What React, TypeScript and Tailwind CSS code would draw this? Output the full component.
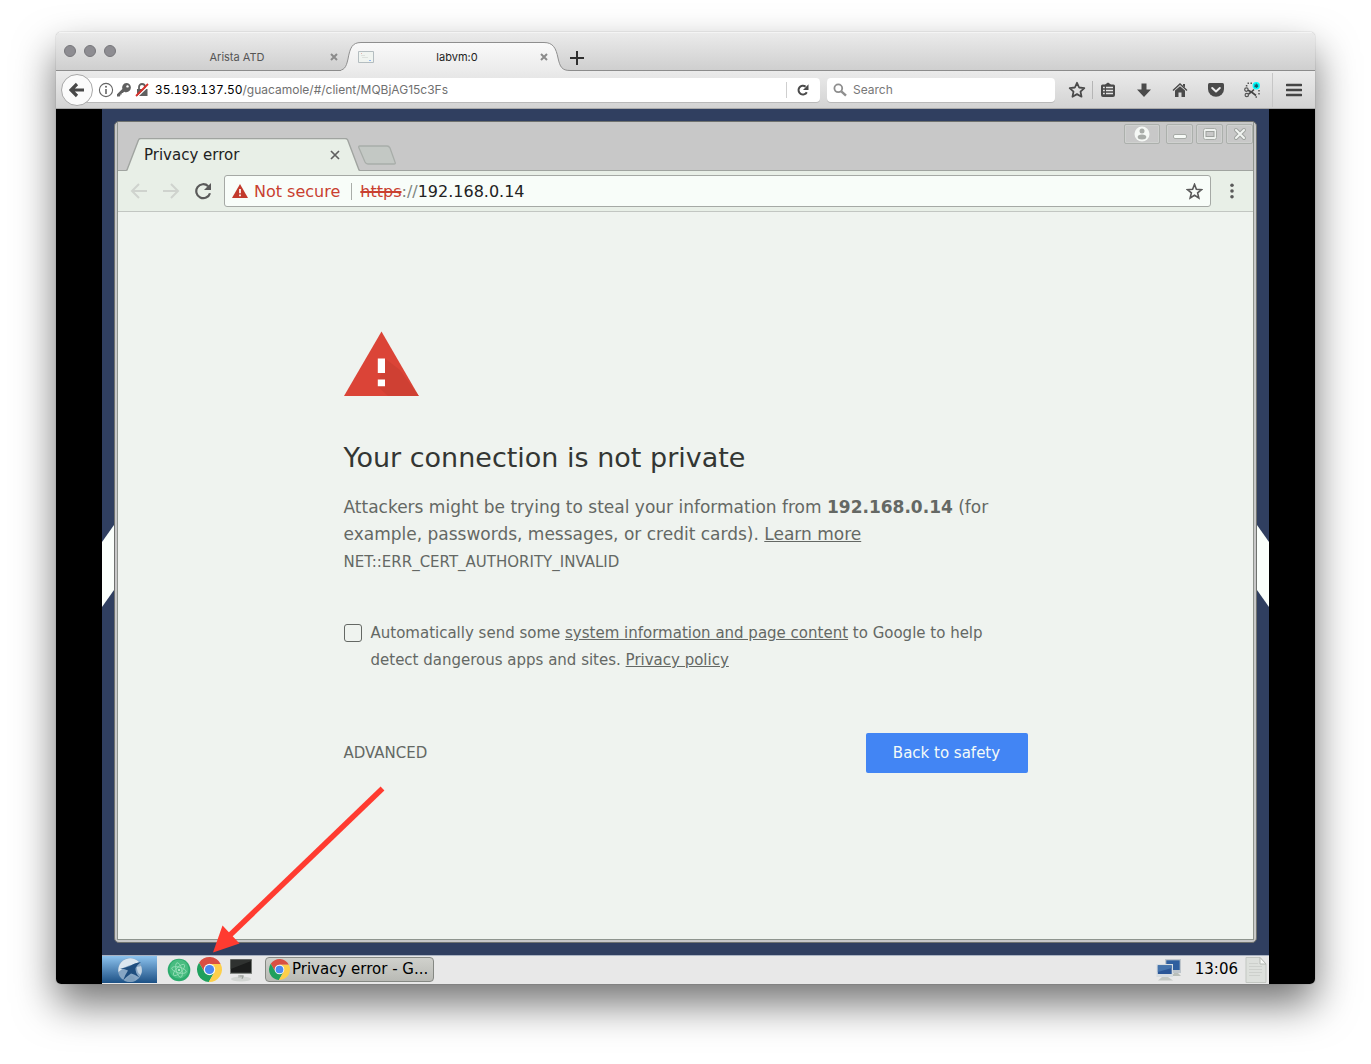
import React from "react";

function ChromeLogo({ className }: { className: string }) {
  return (
    <svg viewBox="0 0 24 24" className={className} aria-hidden="true">
      <path d="M22.7 6.6A12 12 0 0 0 1.96 5.43L7.32 14.7L12 6.6Z" fill="#da4f43" />
      <path d="M1.96 5.43A12 12 0 0 0 11.33 23.98L16.68 14.7L7.32 14.7Z" fill="#1fa05d" />
      <path d="M11.33 23.98A12 12 0 0 0 22.7 6.6L12 6.6L16.68 14.7Z" fill="#fdcf49" />
      <circle cx="12" cy="12" r="5.5" fill="#f5f7f5" />
      <circle cx="12" cy="12" r="4.4" fill="#4a88f0" />
    </svg>
  );
}

function TabClose() {
  return (
    <svg viewBox="0 0 8 8" className="size-2" aria-hidden="true">
      <path d="M1 1L7 7M7 1L1 7" stroke="#8b8b8b" strokeWidth="2" />
    </svg>
  );
}

function TitleBar() {
  return (
    <div className="flex h-[39px] border-b border-[#8c8c8c] border-t border-t-[#f4f4f4] bg-linear-to-b from-[#ebebeb] to-[#cfcfcf]">
      <div className="flex w-[70px] shrink-0 gap-2 pt-3 pl-2">
        <button aria-label="Close window" className="size-3 rounded-full border border-[#77777b] bg-[#8e8d92]" />
        <button aria-label="Minimize window" className="size-3 rounded-full border border-[#77777b] bg-[#8e8d92]" />
        <button aria-label="Zoom window" className="size-3 rounded-full border border-[#77777b] bg-[#8e8d92]" />
      </div>
      <div className="flex w-[215px] items-center pt-[11px]">
        <span className="flex-1 pl-[18px] text-center text-[11px] text-[#555]">Arista ATD</span>
        <button aria-label="Close Arista ATD" className="mr-[3px] p-0">
          <TabClose />
        </button>
      </div>
      <div className="relative -mb-px flex w-[229px] items-center pt-[10px] pr-[22px] pl-[17px]">
        <svg viewBox="0 0 229 29" className="absolute bottom-0 left-0 h-[29px] w-[229px]" aria-hidden="true">
          <defs>
            <linearGradient id="activeTab" x1="0" y1="0" x2="0" y2="1">
              <stop offset="0" stopColor="#fafafa" />
              <stop offset="1" stopColor="#ebebeb" />
            </linearGradient>
          </defs>
          <path d="M-4 29L-4 28.5C3 28.5 5 26 7 17C9 6 11 0.5 20 0.5H203C212 0.5 215 6 217 16C219 25 221 28.5 229 28.5V29Z" fill="url(#activeTab)" />
          <path d="M-4 28.5C3 28.5 5 26 7 17C9 6 11 0.5 20 0.5H203C212 0.5 215 6 217 16C219 25 221 28.5 229 28.5" fill="none" stroke="#8f8f8f" />
        </svg>
        <svg viewBox="0 0 16 12" className="relative h-3 w-4" aria-hidden="true">
          <path d="M0.5 0.5H15.5V11.5H0.5Z" fill="#f0f4f0" stroke="#b4bdc0" />
          <path d="M3 4.5H7M4 6.5H10" stroke="#dde1dd" />
          <path d="M3 2.5H4" stroke="#e2b5af" />
          <path d="M11 9.5H13" stroke="#8fb6f4" />
        </svg>
        <span className="relative flex-1 text-center text-[11px] text-[#222]">labvm:0</span>
        <button aria-label="Close labvm:0" className="relative">
          <TabClose />
        </button>
      </div>
      <button aria-label="New tab" className="pt-3">
        <svg viewBox="0 0 14 14" className="size-[14px]" aria-hidden="true">
          <path d="M7 0V14M0 7H14" stroke="#2f2f2f" strokeWidth="2" />
        </svg>
      </button>
    </div>
  );
}

function NavToolbar() {
  return (
    <div className="flex h-[38px] items-center border-b border-[#a9a9a9] bg-linear-to-b from-[#ebebeb] to-[#d3d3d3] pl-[5px]">
      <button aria-label="Back" className="z-10 flex size-8 shrink-0 items-center justify-center rounded-full border border-[#a8a8a8] bg-[#fbfbfb]">
        <svg viewBox="0 0 16 16" className="size-4" aria-hidden="true">
          <path d="M8 2L2 8L8 14M2.5 8H15" fill="none" stroke="#484848" strokeWidth="3.2" />
        </svg>
      </button>
      <div className="-ml-2 flex h-6 flex-1 items-center rounded-r bg-white pl-3 shadow-[0_1px_0_#b9b9b9]">
        <svg viewBox="0 0 16 16" className="mx-px size-4" aria-hidden="true">
          <circle cx="8" cy="8" r="6.6" fill="none" stroke="#666" strokeWidth="1.1" />
          <path d="M8 7V12" stroke="#666" strokeWidth="1.6" />
          <circle cx="8" cy="4.8" r="1" fill="#666" />
        </svg>
        <svg viewBox="0 0 16 16" className="ml-px size-4" aria-hidden="true">
          <path d="M10.3 1A4.6 4.6 0 0 1 10.3 10.2Q9 10.2 8.2 9.7L6.8 11.1L5.8 11.1L5.6 12.4L4.4 12.6L4.2 13.9L3.5 14.6H1V12.2L6.3 6.9A4.6 4.6 0 0 1 10.3 1Z" fill="#606060" />
          <circle cx="11.5" cy="4.4" r="1.2" fill="#fff" />
        </svg>
        <svg viewBox="0 0 16 16" className="ml-[2px] size-4" aria-hidden="true">
          <path d="M5 7V5A3 3 0 0 1 11 5V7" fill="none" stroke="#606060" strokeWidth="1.8" />
          <path d="M3 7H13.5V14H3Z" fill="#606060" />
          <path d="M3.5 14.5L15.5 3" stroke="#fff" strokeWidth="1.4" />
          <path d="M2 14L14 2" stroke="#d8302b" strokeWidth="1.8" />
        </svg>
        <label htmlFor="address" className="pl-[5px] text-xs text-black tabular-nums">35.193.137.50</label>
        <input
          id="address"
          defaultValue="/guacamole/#/client/MQBjAG15c3Fs"
          className="min-w-0 flex-1 bg-transparent text-xs text-[#707070] outline-none"
        />
        <button aria-label="Reload" className="flex h-4 w-[34px] items-center border-l border-[#cfcfcf] pl-[10px]">
          <svg viewBox="0 0 12 12" className="size-3" aria-hidden="true">
            <path d="M9.8 8.2A4.4 4.4 0 1 1 8.6 2.6" fill="none" stroke="#4a4a4a" strokeWidth="2" />
            <path d="M11.5 0.3V6H6Z" fill="#4a4a4a" />
          </svg>
        </button>
      </div>
      <div className="ml-[7px] flex h-6 w-[228px] items-center rounded bg-white pl-[6px] shadow-[0_1px_0_#b9b9b9]">
        <svg viewBox="0 0 14 14" className="size-[14px]" aria-hidden="true">
          <circle cx="5.3" cy="5.3" r="3.9" fill="none" stroke="#8e8e8e" strokeWidth="1.8" />
          <path d="M8.3 8.3L13 12.7" stroke="#8e8e8e" strokeWidth="2.4" />
        </svg>
        <input
          aria-label="Search"
          placeholder="Search"
          className="min-w-0 flex-1 bg-transparent pl-[6px] text-xs outline-none placeholder:text-[#777]"
        />
      </div>
      <div className="flex shrink-0 items-center pl-[13px]">
        <button aria-label="Bookmark this page" className="flex w-[25px] items-center border-r border-[#b5b5b5]">
          <svg viewBox="0 0 18 18" className="size-[18px]" aria-hidden="true">
            <path d="M9 1.8L11.1 6.5L16.3 7.1L12.5 10.6L13.5 15.7L9 13.1L4.5 15.7L5.5 10.6L1.7 7.1L6.9 6.5Z" fill="none" stroke="#4a4a4a" strokeWidth="1.8" strokeLinejoin="round" />
          </svg>
        </button>
        <button aria-label="Bookmarks menu" className="ml-[7px] w-4">
          <svg viewBox="0 0 16 16" className="size-4" aria-hidden="true">
            <path d="M2.5 2.5H5L8 0.5L11 2.5H13.5Q15 2.5 15 4V13Q15 15 13 15H3Q1 15 1 13V4Q1 2.5 2.5 2.5Z" fill="#4a4a4a" />
            <path d="M3 5.5H4.8M6 5.5H13M3 8.5H4.8M6 8.5H13M3 11.5H4.8M6 11.5H13" stroke="#e4e4e4" strokeWidth="1.6" />
          </svg>
        </button>
        <button aria-label="Downloads" className="ml-5 w-4">
          <svg viewBox="0 0 16 16" className="size-4" aria-hidden="true">
            <path d="M5.5 1.5H10.5V7.5H15L8 15L1 7.5H5.5Z" fill="#4a4a4a" />
          </svg>
        </button>
        <button aria-label="Home" className="ml-5 w-4">
          <svg viewBox="0 0 16 16" className="size-4" aria-hidden="true">
            <path d="M1 8.5L8 2L15 8.5" fill="none" stroke="#4a4a4a" strokeWidth="1.4" />
            <path d="M3 8.6L8 4.2L13 8.6V15H9.5V10.5H6.5V15H3Z" fill="#4a4a4a" />
            <path d="M11 2H13V5.5L11 3.7Z" fill="#4a4a4a" />
          </svg>
        </button>
        <button aria-label="Save to Pocket" className="ml-5 w-4">
          <svg viewBox="0 0 16 16" className="size-4" aria-hidden="true">
            <path d="M1.5 1H14.5Q16 1 16 2.5V7A8 7.8 0 0 1 0 7V2.5Q0 1 1.5 1Z" fill="#4a4a4a" />
            <path d="M4.2 6L8 9.5L11.8 6" fill="none" stroke="#ececec" strokeWidth="2" strokeLinecap="round" strokeLinejoin="round" />
          </svg>
        </button>
        <button aria-label="Take a screenshot" className="ml-5 w-4">
          <svg viewBox="0 0 16 16" className="size-4" aria-hidden="true">
            <path d="M3.5 1.2H5M6.5 1.2H8M2.6 3V4.5M15 8V9.5M15 11V12.5M11.5 15H13" stroke="#555" strokeWidth="1.5" />
            <circle cx="2.4" cy="7.6" r="1.7" fill="none" stroke="#555" strokeWidth="1.2" />
            <circle cx="2.8" cy="13" r="1.7" fill="none" stroke="#555" strokeWidth="1.2" />
            <path d="M4 8.2L7.5 10L12 13.5M4.6 12L8 9.5L10 7.5" fill="none" stroke="#444" strokeWidth="1.6" />
            <circle cx="12.3" cy="3.8" r="3.7" fill="#0ff" />
            <path d="M12.3 1.6V6M10.4 2.7L14.2 4.9M14.2 2.7L10.4 4.9" stroke="#1a5a66" strokeWidth="1.1" />
          </svg>
        </button>
        <button aria-label="Open menu" className="ml-3 flex h-[34px] w-[43px] items-center justify-center border-l border-[#c6c6c6]">
          <svg viewBox="0 0 16 14" className="h-[14px] w-4" aria-hidden="true">
            <path d="M1 2H15M1 7H15M1 12H15" stroke="#454545" strokeWidth="2.6" strokeLinecap="round" />
          </svg>
        </button>
      </div>
    </div>
  );
}

const controlClass =
  "flex h-5 items-center justify-center rounded-[2px] border border-[#acb0ac] shadow-[inset_0_0_0_1px_#cfd1cf]";

function GuestHeader() {
  return (
    <div className="relative flex h-[49px] items-end justify-between border-b border-[#a0a4a0] bg-[#c8c8c8] pl-2">
      <div className="-mb-px flex">
        <div className="relative flex h-[33px] w-[234px] items-center justify-between pr-5 pl-[18px]">
          <svg viewBox="0 0 234 33" className="absolute inset-0 h-[33px] w-[234px]" aria-hidden="true">
            <path d="M0 33V32.5L1 32L12.5 2Q13 0.5 15 0.5H219Q221 0.5 221.7 2L233 32L234 33Z" fill="#e8efe7" />
            <path d="M0 32.5L1 32L12.5 2Q13 0.5 15 0.5H219Q221 0.5 221.7 2L233 32L234 32.5" fill="none" stroke="#a0a4a0" strokeWidth="1.4" />
          </svg>
          <span className="relative pt-px text-[15px] text-[#222]">Privacy error</span>
          <button aria-label="Close tab" className="relative">
            <svg viewBox="0 0 10 10" className="size-[10px]" aria-hidden="true">
              <path d="M1 1L9 9M9 1L1 9" stroke="#606060" strokeWidth="1.7" />
            </svg>
          </button>
        </div>
        <button aria-label="New tab" className="-ml-1 mb-1 self-end">
          <svg viewBox="0 0 42 22" className="h-[22px] w-[42px]" aria-hidden="true">
            <path d="M4 1H31Q33 1 34 3L39 17Q40 19 38 19H12Q10 19 9 17L3 3Q2 1 4 1Z" fill="#c3c8c4" stroke="#a8ada9" strokeWidth="1.3" />
          </svg>
        </button>
      </div>
      <div className="flex gap-[3px] self-start pt-[2px]">
        <button aria-label="Profile" className={`${controlClass} mr-[3px] w-9`}>
          <svg viewBox="0 0 16 16" className="size-4" aria-hidden="true">
            <circle cx="8" cy="8" r="7.5" fill="#f5f8f5" />
            <circle cx="8" cy="5" r="2.5" fill="#a8aca8" />
            <ellipse cx="8" cy="11" rx="4.3" ry="2.5" fill="#a8aca8" />
          </svg>
        </button>
        <button aria-label="Minimize" className={`${controlClass} w-[27px]`}>
          <svg viewBox="0 0 14 14" className="size-[14px]" aria-hidden="true">
            <rect x="0.5" y="7.5" width="13" height="4" rx="1.5" fill="#f7faf7" stroke="#a6aaa6" />
          </svg>
        </button>
        <button aria-label="Maximize" className={`${controlClass} w-[27px]`}>
          <svg viewBox="0 0 14 12" className="h-3 w-[14px]" aria-hidden="true">
            <rect x="0.5" y="0.5" width="13" height="11" rx="2" fill="#eef1ee" stroke="#a6aaa6" />
            <rect x="3" y="3.5" width="8" height="5" fill="#c8c8c8" stroke="#9da19d" />
          </svg>
        </button>
        <button aria-label="Close" className={`${controlClass} w-[27px]`}>
          <svg viewBox="0 0 14 14" className="size-[14px]" aria-hidden="true">
            <path d="M3 3L11 11M11 3L3 11" stroke="#a0a4a0" strokeWidth="4" strokeLinecap="round" />
            <path d="M3 3L11 11M11 3L3 11" stroke="#f2f5f2" strokeWidth="2" strokeLinecap="round" />
          </svg>
        </button>
      </div>
    </div>
  );
}

function GuestToolbar() {
  return (
    <div className="flex h-[41px] items-center border-b border-[#c2c6c2] bg-[#e8efe7] pl-3">
      <button aria-label="Back" className="w-8">
        <svg viewBox="0 0 18 18" className="size-[18px]" aria-hidden="true">
          <path d="M9 2L2 9L9 16M2 9H17" fill="none" stroke="#cfd3ce" strokeWidth="2" />
        </svg>
      </button>
      <button aria-label="Forward" className="w-8">
        <svg viewBox="0 0 18 18" className="size-[18px]" aria-hidden="true">
          <path d="M9 2L16 9L9 16M16 9H1" fill="none" stroke="#cfd3ce" strokeWidth="2" />
        </svg>
      </button>
      <button aria-label="Reload page" className="w-[30px]">
        <svg viewBox="0 0 18 18" className="size-[18px]" aria-hidden="true">
          <path d="M16 11.2A7 7 0 1 1 14.2 4.2" fill="none" stroke="#5a5a5a" strokeWidth="2.2" />
          <path d="M17 1V8H10Z" fill="#5a5a5a" />
        </svg>
      </button>
      <div className="flex h-8 flex-1 items-center rounded-[3px] border border-[#a5a9a5] bg-[#f8fdf9] px-[7px] text-base">
        <svg viewBox="0 0 16 14" className="h-[14px] w-4" aria-hidden="true">
          <path d="M8 0L16 14H0Z" fill="#c23a2b" />
          <path d="M8 5V9.3M8 10.6V12.2" stroke="#fff" strokeWidth="1.7" />
        </svg>
        <span className="ml-[6px] border-r border-[#a9ada9] pt-px pr-[11px] text-base leading-4 whitespace-nowrap text-[#c9402f]">Not secure</span>
        <label htmlFor="guest-address" className="pt-px pl-2 text-base text-[#808580]">
          <span className="text-[#c9402f] line-through decoration-2">https</span>://
        </label>
        <input id="guest-address" defaultValue="192.168.0.14" className="min-w-0 flex-1 bg-transparent pt-px text-base text-[#222] outline-none" />
        <button aria-label="Bookmark">
          <svg viewBox="0 0 18 18" className="size-[17px]" aria-hidden="true">
            <path d="M9 1.5L11 6.6L16.5 7L12.3 10.5L13.6 15.9L9 13L4.4 15.9L5.7 10.5L1.5 7L7 6.6Z" fill="none" stroke="#5a5a5a" strokeWidth="1.7" />
          </svg>
        </button>
      </div>
      <button aria-label="Menu" className="flex w-[42px] justify-center">
        <svg viewBox="0 0 4 16" className="h-4 w-1" aria-hidden="true">
          <circle cx="2" cy="2.3" r="1.8" fill="#5a5a5a" />
          <circle cx="2" cy="8" r="1.8" fill="#5a5a5a" />
          <circle cx="2" cy="13.7" r="1.8" fill="#5a5a5a" />
        </svg>
      </button>
    </div>
  );
}

function PrivacyError() {
  return (
    <main className="flex-1 bg-[#eff3ef] pt-[119px] text-[#646864]">
      <div className="mx-auto max-w-[684px]">
        <svg viewBox="0 0 76 66" className="h-[66px] w-[76px]" aria-hidden="true">
          <path d="M37.5 0.5L74.8 65H0Z" fill="#db4437" />
          <path d="M41 27.5L56 39L74.8 65H44L33.8 55.5L37 42Z" fill="#cf4033" />
          <path d="M33.8 27.5H41V42H33.8ZM33.8 48.5H41V55.3H33.8Z" fill="#fff" />
        </svg>
        <h1 className="mt-10 text-[27px] leading-[42px] text-[#333633]">Your connection is not private</h1>
        <p className="mt-[15px] text-[17px] leading-[27px]">
          Attackers might be trying to steal your information from <strong className="font-bold">192.168.0.14</strong> (for
          example, passwords, messages, or credit cards).{" "}
          <a href="#learn-more" className="underline">Learn more</a>
        </p>
        <p className="text-[15px] leading-7">NET::ERR_CERT_AUTHORITY_INVALID</p>
        <div className="mt-11 flex">
          <input
            id="report"
            type="checkbox"
            className="mt-1 size-[18px] shrink-0 appearance-none rounded-[3px] border border-[#646864] checked:bg-[#646864]"
          />
          <label htmlFor="report" className="pl-[9px] text-[15px] leading-[27px]">
            Automatically send some <a href="#system-information" className="underline">system information and page content</a> to
            Google to help detect dangerous apps and sites. <a href="#privacy" className="underline">Privacy policy</a>
          </label>
        </div>
        <div className="mt-[59px] flex items-center justify-between">
          <button className="text-[15px]">ADVANCED</button>
          <button className="h-10 w-[162px] rounded-[2px] bg-[#4285f4] text-[15px] text-[#f4fbf8]">Back to safety</button>
        </div>
      </div>
    </main>
  );
}

function Taskbar() {
  return (
    <div className="flex h-[29px] shrink-0 items-center border-t border-[#aab3c2] bg-[#e8e8e8] pb-px text-black">
      <button aria-label="Start menu" className="flex h-full w-[55px] items-center justify-center bg-linear-to-b from-[#8dc3ee] to-[#1c5185]">
        <svg viewBox="0 0 26 26" className="size-[26px]" aria-hidden="true">
          <circle cx="13" cy="13" r="12" fill="#86a5c3" />
          <path d="M2.5 8A12 12 0 0 1 22 5Q17 8 12 8.5Q7 10 1.5 15Q1 11 2.5 8Z" fill="#dbe6ef" />
          <path d="M3 11.5Q9 10.5 13 9Q17 6 24 5Q20 8 18.5 11Q18 16 22.5 20.5Q17 17 14 16.5Q9 20 6 23.5Q8 18 11 13.5Q7 11.5 3 11.5Z" fill="#1f4e7f" />
          <path d="M20 10L24 9Q26 14 23.5 18Q19.5 15 20 10Z" fill="#c3d3e1" />
          <path d="M13.5 18.5L17 20L18.5 23.5Q13 26 8 23.5Z" fill="#7e9fbd" />
        </svg>
      </button>
      <button aria-label="Atom" className="ml-[10px]">
        <svg viewBox="0 0 24 24" className="size-6" aria-hidden="true">
          <circle cx="12" cy="12" r="11.3" fill="#2cab6d" />
          <circle cx="12" cy="11" r="9.5" fill="#48bc80" />
          <g fill="none" stroke="#93dcb6" strokeWidth="0.9">
            <ellipse cx="12" cy="12" rx="7.5" ry="2.8" transform="rotate(15 12 12)" />
            <ellipse cx="12" cy="12" rx="7.5" ry="2.8" transform="rotate(75 12 12)" />
            <ellipse cx="12" cy="12" rx="7.5" ry="2.8" transform="rotate(135 12 12)" />
          </g>
          <circle cx="12" cy="12" r="1" fill="#c9f3dc" />
        </svg>
      </button>
      <button aria-label="Chrome" className="ml-[6px]">
        <ChromeLogo className="size-[25px]" />
      </button>
      <button aria-label="Terminal" className="ml-[7px]">
        <svg viewBox="0 0 24 24" className="size-6" aria-hidden="true">
          <ellipse cx="12" cy="21" rx="10" ry="2.4" fill="#d3d6d3" />
          <path d="M9 17H15V20H9Z" fill="#c3c7c3" />
          <path d="M10.5 18H14L13 21" fill="none" stroke="#9a9e9a" />
          <rect x="1" y="1" width="22" height="15" fill="#858985" />
          <rect x="1.8" y="1.8" width="20.4" height="13" fill="#1b1d1c" />
          <path d="M1.8 14.8V11L22.2 3V1.8H1.8Z" fill="#2f3230" />
        </svg>
      </button>
      <button className="ml-3 flex h-[25px] w-[169px] items-center rounded border border-[#858883] bg-linear-to-b from-[#d0d1cc] to-[#b9bab5] pl-[3px] text-[15px] whitespace-nowrap">
        <ChromeLogo className="mr-[2px] size-[21px]" />
        Privacy error - G...
      </button>
      <div className="ml-auto flex items-center">
        <svg viewBox="0 0 26 24" className="h-6 w-[26px]" aria-hidden="true">
          <path d="M9 1H25V15H9Z" fill="#bec5cb" />
          <path d="M10.3 2.3H23.7V12H10.3Z" fill="#2f5f9f" />
          <path d="M18 15H22L25 18H16Z" fill="#b9beb9" />
          <path d="M0.5 6H17V19H0.5Z" fill="#d7dde1" />
          <path d="M1.8 7.3H15.7V16H1.8Z" fill="#2b5797" />
          <path d="M1.8 7.3H15.7V10L1.8 14Z" fill="#4574ad" />
          <path d="M6 19H12L17 22.5H2Z" fill="#c3c8c3" />
        </svg>
        <span className="ml-[13px] text-[15px]">13:06</span>
        <svg viewBox="0 0 22 26" className="mr-[2px] ml-[7px] h-[26px] w-[22px]" aria-hidden="true">
          <path d="M1 0.5H15L21 7V25.5H1Z" fill="#dde0dc" stroke="#c3c7c2" />
          <path d="M15 0.5V7H21Z" fill="#f8faf7" stroke="#b5b9b4" />
          <path d="M4 6.5H13M4 9.5H17M4 12.5H17M4 15.5H17M4 18.5H15" stroke="#cdd0cc" strokeWidth="1.2" />
        </svg>
      </div>
    </div>
  );
}

export default function App() {
  return (
    <div className="flex min-h-screen flex-col bg-white px-14 pt-8 pb-20 font-['Inter',sans-serif]">
      <div className="flex flex-1 flex-col overflow-hidden rounded-[5px] shadow-[0_0_1px_rgba(0,0,0,0.5),0_20px_40px_rgba(0,0,0,0.55)]">
        <TitleBar />
        <NavToolbar />
        <div className="flex flex-1 flex-col bg-black px-[46px] font-['DejaVu_Sans',sans-serif]">
          <div className="relative flex flex-1 flex-col bg-[#303f60]">
            <svg viewBox="0 0 12 82" className="absolute top-[416px] left-0 h-[82px] w-3" aria-hidden="true">
              <path d="M0 17L12 0V65L0 82Z" fill="#fafffb" />
            </svg>
            <svg viewBox="0 0 12 82" className="absolute top-[416px] right-0 h-[82px] w-3" aria-hidden="true">
              <path d="M12 17L0 0V65L12 82Z" fill="#fafffb" />
            </svg>
            <div className="m-3 flex flex-1 flex-col rounded-[5px] border border-[#6f726f] bg-[#c8c8c8]">
              <div className="mx-[2px] mb-[2px] flex flex-1 flex-col border-x border-b border-[#8e948e]">
                <GuestHeader />
                <GuestToolbar />
                <PrivacyError />
              </div>
            </div>
            <Taskbar />
            <svg viewBox="210 785 176 170" className="pointer-events-none absolute bottom-[29px] left-[108px] h-[170px] w-44" aria-hidden="true">
              <path d="M382.5 788.5L228 937" stroke="#ff3b30" strokeWidth="5.5" />
              <path d="M213 952.5L222.5 925.5L239.5 943.5Z" fill="#ff3b30" />
            </svg>
          </div>
        </div>
      </div>
    </div>
  );
}
